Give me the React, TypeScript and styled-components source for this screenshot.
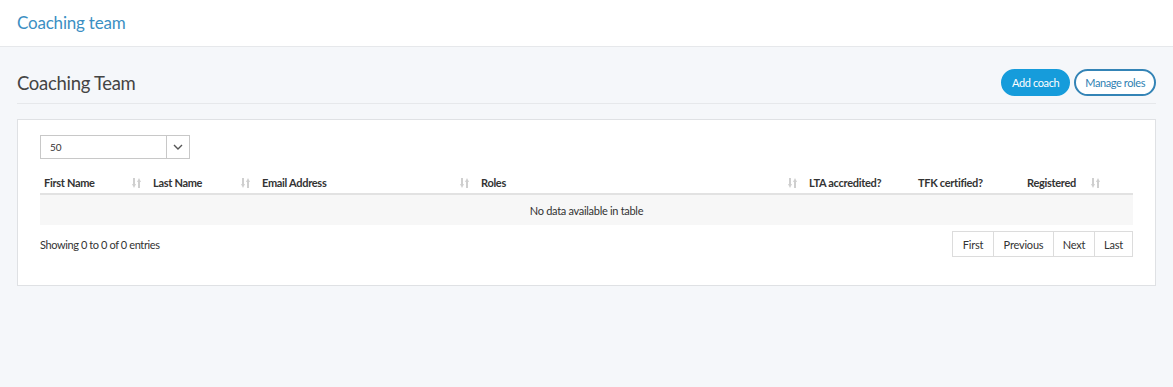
import React from "react";
import styled, { createGlobalStyle } from "styled-components";

const Global = createGlobalStyle`
  html, body { margin: 0; padding: 0; }
  body {
    background: #f5f7fa;
    font-family: Lato, "Open Sans", "Liberation Sans", sans-serif;
    color: #333;
  }
  * { box-sizing: border-box; }
`;

const Page = styled.div`
  width: 1173px;
  min-height: 387px;
  background: #f5f7fa;
`;

const TopBar = styled.header`
  height: 47px;
  background: #fff;
  border-bottom: 1px solid #e6e8eb;
  display: flex;
  align-items: center;
  padding: 0 17px 2px;
`;

const TopTitle = styled.h1`
  margin: 0;
  font-size: 17px;
  font-weight: 400;
  color: #3b8fc3;
  letter-spacing: -0.2px;
`;

const Main = styled.main`
  padding: 0 17px;
`;

const HeadingRow = styled.div`
  display: flex;
  align-items: center;
  justify-content: space-between;
  padding: 22px 0 7px;
  border-bottom: 1px solid #e6e8eb;
`;

const Heading = styled.h2`
  margin: 0;
  font-size: 18.5px;
  font-weight: 400;
  color: #444;
  letter-spacing: -0.3px;
`;

const Actions = styled.div`
  display: flex;
  gap: 4px;
`;

const PillButton = styled.button<{ $primary?: boolean }>`
  height: 27px;
  padding: 0 9px;
  border-radius: 14px;
  font-family: inherit;
  font-size: 11px;
  letter-spacing: -0.4px;
  cursor: pointer;
  background: ${(p) => (p.$primary ? "#169cdb" : "#fff")};
  color: ${(p) => (p.$primary ? "#fff" : "#2f7fb2")};
  border: ${(p) => (p.$primary ? "2px solid #169cdb" : "2px solid #3484b6")};
`;

const Card = styled.section`
  margin-top: 15px;
  background: #fff;
  border: 1px solid #dfe1e4;
  padding: 15px 22px 28px;
`;

const SelectBox = styled.div`
  width: 150px;
  height: 24px;
  display: flex;
  border: 1px solid #c8c8c8;
  font-size: 10px;
  color: #333;
`;

const SelectValue = styled.div`
  flex: 1;
  display: flex;
  align-items: center;
  padding-left: 9px;
  border-right: 1px solid #c8c8c8;
`;

const SelectArrow = styled.div`
  width: 22px;
  display: flex;
  align-items: center;
  justify-content: center;
  color: #555;
`;

const Table = styled.table`
  width: 100%;
  margin-top: 13px;
  border-collapse: collapse;
  table-layout: fixed;
  font-size: 11px;
`;

const Th = styled.th<{ $w: number }>`
  width: ${(p) => p.$w}px;
  height: 22px;
  padding: 0 4px;
  text-align: left;
  font-weight: 700;
  color: #333;
  letter-spacing: -0.3px;
  border-bottom: 2px solid #e2e2e2;
  position: relative;
  white-space: nowrap;
`;

const SortIcon = styled.svg`
  position: absolute;
  right: 8px;
  top: 6px;
`;

const EmptyCell = styled.td`
  height: 31px;
  padding: 0;
  background: #f7f7f7;
  text-align: center;
  color: #333;
  font-size: 11px;
  letter-spacing: -0.3px;
`;

const Footer = styled.div`
  display: flex;
  align-items: center;
  justify-content: space-between;
  margin-top: 6px;
`;

const Info = styled.div`
  font-size: 11px;
  color: #333;
  letter-spacing: -0.4px;
`;

const Pager = styled.div`
  display: flex;
  border: 1px solid #dcdcdc;
`;

const PageBtn = styled.div<{ $w: number }>`
  width: ${(p) => p.$w}px;
  height: 24px;
  display: flex;
  align-items: center;
  justify-content: center;
  font-size: 11px;
  color: #333;
  letter-spacing: -0.2px;
  & + & { border-left: 1px solid #dcdcdc; }
`;

const Sort = () => (
  <SortIcon width="9" height="10" viewBox="0 0 9 10">
    <g fill="#cfcfcf">
      <rect x="1" y="0" width="2" height="7" />
      <polygon points="0,6 4,6 2,10" />
      <rect x="6" y="3" width="2" height="7" />
      <polygon points="5,4 9,4 7,0" />
    </g>
  </SortIcon>
);

const columns: { label: string; w: number; sort: boolean }[] = [
  { label: "First Name", w: 109, sort: true },
  { label: "Last Name", w: 109, sort: true },
  { label: "Email Address", w: 219, sort: true },
  { label: "Roles", w: 328, sort: true },
  { label: "LTA accredited?", w: 109, sort: false },
  { label: "TFK certified?", w: 109, sort: false },
  { label: "Registered", w: 85, sort: true },
  { label: "", w: 25, sort: false },
];

export default function App() {
  return (
    <Page>
      <Global />
      <TopBar>
        <TopTitle>Coaching team</TopTitle>
      </TopBar>
      <Main>
        <HeadingRow>
          <Heading>Coaching Team</Heading>
          <Actions>
            <PillButton $primary>Add coach</PillButton>
            <PillButton>Manage roles</PillButton>
          </Actions>
        </HeadingRow>
        <Card>
          <SelectBox>
            <SelectValue>50</SelectValue>
            <SelectArrow>
              <svg width="10" height="6" viewBox="0 0 10 6">
                <polyline points="1,1 5,5 9,1" fill="none" stroke="#555" strokeWidth="1.4" />
              </svg>
            </SelectArrow>
          </SelectBox>
          <Table>
            <thead>
              <tr>
                {columns.map((c, i) => (
                  <Th key={i} $w={c.w}>
                    {c.label}
                    {c.sort && <Sort />}
                  </Th>
                ))}
              </tr>
            </thead>
            <tbody>
              <tr>
                <EmptyCell colSpan={columns.length}>No data available in table</EmptyCell>
              </tr>
            </tbody>
          </Table>
          <Footer>
            <Info>Showing 0 to 0 of 0 entries</Info>
            <Pager>
              <PageBtn $w={40}>First</PageBtn>
              <PageBtn $w={60}>Previous</PageBtn>
              <PageBtn $w={41}>Next</PageBtn>
              <PageBtn $w={38}>Last</PageBtn>
            </Pager>
          </Footer>
        </Card>
      </Main>
    </Page>
  );
}
